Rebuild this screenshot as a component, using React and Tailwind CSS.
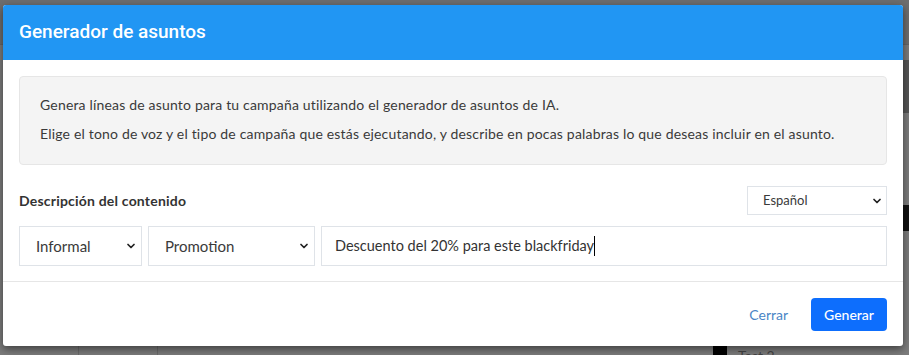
import { ChevronDown } from "lucide-react";

function FakeSelect({ value, className, textClass = "text-[15px]", pad = "pl-[16px] pr-[4px]" }) {
  return (
    <div
      className={`flex items-center justify-between bg-white border border-[#dfe3e8] ${pad} ${className}`}
    >
      <span className={`${textClass} text-[#3a3a3a]`}>{value}</span>
      <ChevronDown className="w-[12px] h-[12px] text-[#222]" strokeWidth={3.5} />
    </div>
  );
}

export default function App() {
  return (
    <div
      className="relative w-[909px] h-[355px] overflow-hidden bg-[#7c7c7c]"
      style={{ fontFamily: "Lato, 'Noto Sans', sans-serif" }}
    >
      {/* page behind the backdrop */}
      <div className="h-[45px] bg-[#6e6e6e] border-b border-[#666]" />
      <div className="absolute right-0 top-[60px] w-[6px] h-[53px] bg-[#555]" />
      <div className="absolute right-0 top-[205px] w-[6px] h-[26px] bg-[#111]" />
      <div className="absolute left-[78px] top-[346px] w-px h-[9px] bg-[#6a6a6a]" />
      <div className="absolute left-[157px] top-[346px] w-px h-[9px] bg-[#6a6a6a]" />
      <div className="absolute left-[713px] top-[346px] w-[14px] h-[9px] bg-black" />
      <div className="absolute left-[738px] top-[346px] text-[14px] text-[#444] leading-5">Test 2</div>

      {/* modal */}
      <div className="absolute left-[3px] top-[5px] w-[900px] bg-white rounded-[3px] shadow-[0_3px_9px_rgba(0,0,0,0.5)] overflow-hidden">
        <div className="h-[55px] bg-[#2196f3] flex items-center px-[16px]">
          <h1
            className="text-white text-[19px] font-medium"
            style={{ fontFamily: "Roboto, 'Noto Sans', sans-serif" }}
          >
            Generador de asuntos
          </h1>
        </div>

        <div className="px-[16px] pt-[16px] pb-[15px]">
          <div className="h-[89px] bg-[#f4f4f4] border border-[#e6e6e6] rounded-[4px] px-[20px] pt-[18px] text-[14px] leading-5 tracking-[0.18px] text-[#3a3a3a] space-y-[9px]">
            <p>Genera líneas de asunto para tu campaña utilizando el generador de asuntos de IA.</p>
            <p>
              Elige el tono de voz y el tipo de campaña que estás ejecutando, y describe en pocas
              palabras lo que deseas incluir en el asunto.
            </p>
          </div>

          <div className="mt-[21px] flex items-center justify-between">
            <span className="text-[14px] font-bold tracking-[0.2px] text-[#333]">
              Descripción del contenido
            </span>
            <FakeSelect
              value="Español"
              className="w-[140px] h-[29px]"
              textClass="text-[13px]"
              pad="pl-[15px] pr-[3px]"
            />
          </div>

          <div className="mt-[11px] flex gap-[6px] h-[40px]">
            <FakeSelect value="Informal" className="w-[123px]" />
            <FakeSelect value="Promotion" className="w-[167px]" />
            <div className="flex-1 flex items-center border border-[#dfe3e8] px-[13px]">
              <span className="text-[14.5px] text-[#333]">Descuento del 20% para este blackfriday</span>
              <span className="w-px h-[20px] bg-black" />
            </div>
          </div>
        </div>

        <div className="h-px bg-[#e6e6e6]" />

        <div className="h-[64px] flex items-center justify-end px-[16px] gap-[23px]">
          <button className="text-[14px] text-[#4a85c6]">Cerrar</button>
          <button className="h-[33px] px-[13px] bg-[#0d6efd] rounded-[4px] text-white text-[14px] font-medium">
            Generar
          </button>
        </div>
      </div>
    </div>
  );
}
